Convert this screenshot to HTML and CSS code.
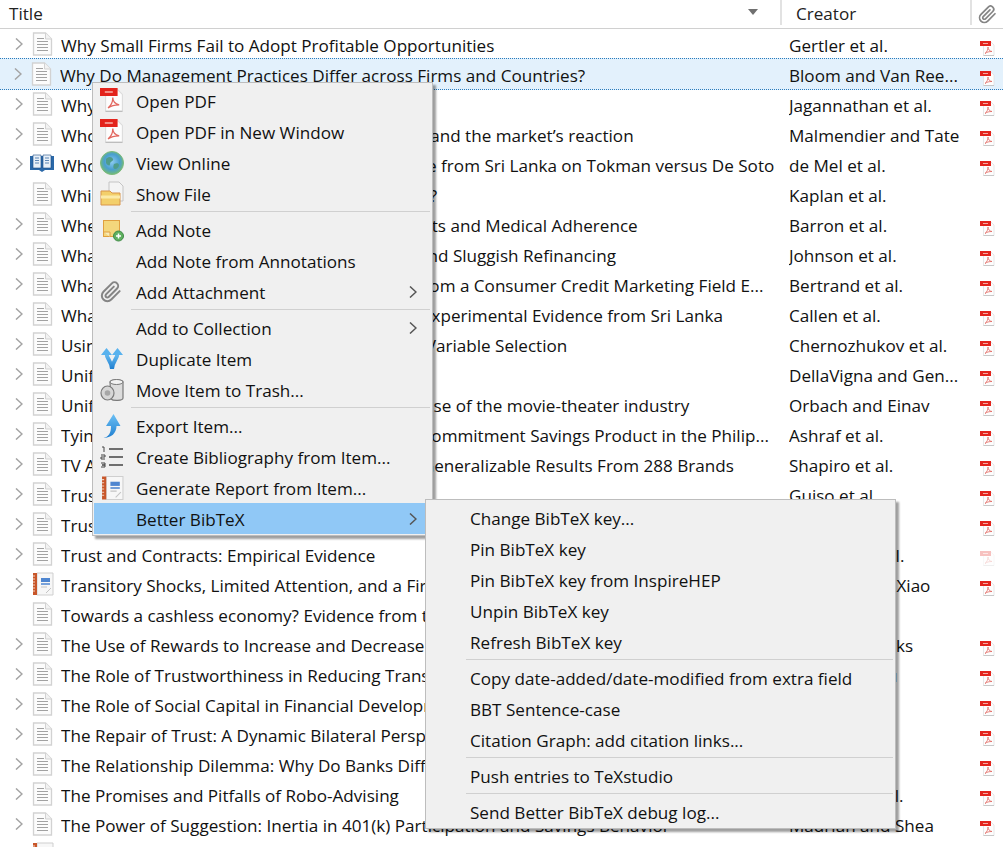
FILE: index.html
```html
<!DOCTYPE html>
<html lang="en">
<head>
  <meta charset="UTF-8">
  <title>Library</title>
  <link rel="stylesheet" href="styles.css">
</head>
<body>

  <svg class="defs" width="0" height="0">
    <defs>
      <linearGradient id="blue-arrow" x1="0" y1="0" x2="0" y2="1">
        <stop offset="0" stop-color="#6cc0f4"/>
        <stop offset="1" stop-color="#1f7fd0"/>
      </linearGradient>
      <radialGradient id="globe" cx="50%" cy="45%" r="55%">
        <stop offset="0" stop-color="#8ccbf0"/>
        <stop offset=".6" stop-color="#4a9fd0"/>
        <stop offset="1" stop-color="#72bb74"/>
      </radialGradient>
      <symbol id="i-doc" viewBox="0 0 21 24">
        <path d="M1.500 1h12l6 6v16h-18z" fill="#fcfcfc" stroke="#d2d2d2" stroke-width="1.300"/>
        <path d="M13.500 1v6h6" fill="#f2f2f2" stroke="#d2d2d2"/>
        <path d="M5 6.500h7M5 9.500h11M5 12.500h11M5 15.500h11M5 18.500h11" stroke="#a2a2a2"/>
      </symbol>
      <symbol id="i-book" viewBox="0 0 24 20">
        <path d="M0 2h24v14h-9l-3 2-3-2h-9z" fill="#2a68a8"/>
        <path d="M3 1h8v13h-8zM13 1h8v13h-8z" fill="#e8f0f8" stroke="#174a84" stroke-width=".6"/>
        <path d="M5 4h4M5 6.500h4M5 9h4M15 4h4M15 6.500h4M15 9h4" stroke="#5d86b4"/>
      </symbol>
      <symbol id="i-report" viewBox="0 0 22 24">
        <path d="M5 1h16v22h-16z" fill="#f7f7f7" stroke="#cfcfcf"/>
        <rect x="1" y="1" width="4" height="22" fill="#c8562a"/>
        <path d="M1 4h2M1 7h2M1 10h2M1 13h2M1 16h2M1 19h2" stroke="#f2d3c0"/>
        <rect x="9" y="6" width="9" height="4" fill="#4f86d0"/>
        <path d="M9 12h9" stroke="#4f86d0" stroke-width="1.500"/>
        <path d="M9 15h6M14 21l5-5" stroke="#c4c4c4"/>
      </symbol>
      <symbol id="i-pdf" viewBox="0 0 15 15">
        <path d="M3.500 .5h7l3.500 3.500v10.500h-10.500z" fill="#fdfdfd" stroke="#dcdcdc" stroke-width=".7"/>
        <path d="M3.500 14.600h10.500" stroke="#bdbdbd" stroke-width=".8"/>
        <rect x="0" y="0" width="11" height="5" fill="#e3231c"/>
        <path d="M3 2.500h5" stroke="#f6a8a0" stroke-width="1"/>
        <path d="M5 12.500c2-1.500 3-4 3-6.500 0 2.500 1.500 4 4 4.500-3 0-5 .5-7 2z" fill="none" stroke="#e2675f" stroke-width=".8"/>
      </symbol>
      <symbol id="i-clip" viewBox="0 0 24 24">
        <path d="M21.440 11.050l-9.190 9.190a6 6 0 0 1-8.490-8.490l9.190-9.190a4 4 0 0 1 5.660 5.660l-9.200 9.190a2 2 0 0 1-2.830-2.830l8.490-8.480" fill="none" stroke="#858585" stroke-width="2.200" stroke-linecap="round"/>
      </symbol>
      <symbol id="i-chev" viewBox="0 0 8 12">
        <path d="M1 .5l6 5.500-6 5.500" fill="none" stroke="currentColor" stroke-width="1.500"/>
      </symbol>
    </defs>
  </svg>

  <div class="items">
    <div class="head">
      <div class="head-title">Title<span class="sort"></span></div>
      <div class="head-creator">Creator</div>
      <div class="head-att"><svg class="clip"><use href="#i-clip"/></svg></div>
    </div>
    <div id="rows"></div>
  </div>

  <!-- context menu -->
  <div class="menu main-menu">
    <div class="mi"><svg class="mi-icon"><use href="#i-pdf" width="24" height="24"/></svg><span>Open PDF</span></div>
    <div class="mi"><svg class="mi-icon"><use href="#i-pdf" width="24" height="24"/></svg><span>Open PDF in New Window</span></div>
    <div class="mi">
      <svg class="mi-icon" viewBox="0 0 24 26">
        <circle cx="12" cy="13" r="11.500" fill="url(#globe)" stroke="#7cba7c"/>
        <path d="M6 9c3-3 6-2 7 0s-3 2-3 5-3 1-4-1zM14 14c2-1 5-1 5 1s-2 4-4 4-2-3-1-5z" fill="#4f9c8a"/>
      </svg>
      <span>View Online</span>
    </div>
    <div class="mi">
      <svg class="mi-icon" viewBox="0 0 24 26">
        <path d="M9 1h10l4 4v15h-14z" fill="#f4f4f4" stroke="#c4c4c4"/>
        <path d="M1 10h9l2 2h8v12h-19z" fill="#f3cf6b" stroke="#d9954a"/>
        <path d="M1 16h19" stroke="#fbeaa8" stroke-width="3"/>
      </svg>
      <span>Show File</span>
    </div>
    <div class="sep"></div>
    <div class="mi">
      <svg class="mi-icon" viewBox="0 0 24 26">
        <rect x="3.500" y="3.500" width="16" height="16" fill="#f4d77c" stroke="#e0a040"/>
        <path d="M4 15h6v5" fill="#f8ebb8" stroke="#e0a040"/>
        <circle cx="18.500" cy="19" r="5" fill="#5fb060" stroke="#3e8a46"/>
        <path d="M16 19h5M18.500 16.500v5" stroke="#fff" stroke-width="1.500"/>
      </svg>
      <span>Add Note</span>
    </div>
    <div class="mi"><span class="mi-icon"></span><span>Add Note from Annotations</span></div>
    <div class="mi">
      <svg class="mi-icon"><use href="#i-clip" width="22" height="22" x="0" y="2"/></svg>
      <span>Add Attachment</span>
      <svg class="mi-arrow"><use href="#i-chev"/></svg>
    </div>
    <div class="sep"></div>
    <div class="mi">
      <span class="mi-icon"></span>
      <span>Add to Collection</span>
      <svg class="mi-arrow"><use href="#i-chev"/></svg>
    </div>
    <div class="mi">
      <svg class="mi-icon" viewBox="0 0 24 26">
        <path d="M6.500 7c0 7 5.500 8 5.500 16M17.500 7c0 7-5.500 8-5.500 16" fill="none" stroke="url(#blue-arrow)" stroke-width="4"/>
        <path d="M1 9l5.500-7 5.500 7zM12 9l5.500-7 5.500 7z" fill="#58b2ee"/>
      </svg>
      <span>Duplicate Item</span>
    </div>
    <div class="mi">
      <svg class="mi-icon" viewBox="0 0 24 26">
        <path d="M10 5c0-3 13-3 13 0v16c0 3-10 3-12 1z" fill="#dcdcdc" stroke="#7a7a7a" stroke-width="1.200"/>
        <ellipse cx="16.500" cy="5" rx="6.500" ry="2.500" fill="#f2f2f2" stroke="#7a7a7a"/>
        <ellipse cx="7.500" cy="16" rx="6.500" ry="7" fill="#d6d6d6" stroke="#7a7a7a" stroke-width="1.200"/>
        <circle cx="7.500" cy="16" r="2.800" fill="#a6a6a6"/>
      </svg>
      <span>Move Item to Trash...</span>
    </div>
    <div class="sep"></div>
    <div class="mi">
      <svg class="mi-icon" viewBox="0 0 24 26">
        <path d="M3 25c6-1 8-5 8-12H6l7.500-12 7 12h-4c0 7-5 12-13.500 12z" fill="url(#blue-arrow)"/>
      </svg>
      <span>Export Item...</span>
    </div>
    <div class="mi">
      <svg class="mi-icon" viewBox="0 0 24 26">
        <path d="M9 5h14M9 13h14M9 21h14" stroke="#444" stroke-width="1.600"/>
        <path d="M2 3h2v5M1 11h4v2h-4v2h4M1 19h4v2h-3 3v2h-4" fill="none" stroke="#444"/>
      </svg>
      <span>Create Bibliography from Item...</span>
    </div>
    <div class="mi"><svg class="mi-icon"><use href="#i-report" x="1" width="23" height="26"/></svg><span>Generate Report from Item...</span></div>
    <div class="mi mi-active">
      <span class="mi-icon"></span>
      <span>Better BibTeX</span>
      <svg class="mi-arrow"><use href="#i-chev"/></svg>
    </div>
  </div>

  <div class="menu sub-menu">
    <div class="mi"><span>Change BibTeX key...</span></div>
    <div class="mi"><span>Pin BibTeX key</span></div>
    <div class="mi"><span>Pin BibTeX key from InspireHEP</span></div>
    <div class="mi"><span>Unpin BibTeX key</span></div>
    <div class="mi"><span>Refresh BibTeX key</span></div>
    <div class="sep"></div>
    <div class="mi"><span>Copy date-added/date-modified from extra field</span></div>
    <div class="mi"><span>BBT Sentence-case</span></div>
    <div class="mi"><span>Citation Graph: add citation links...</span></div>
    <div class="sep"></div>
    <div class="mi"><span>Push entries to TeXstudio</span></div>
    <div class="sep"></div>
    <div class="mi"><span>Send Better BibTeX debug log...</span></div>
  </div>

  <script>
    // title, creator, attachment (1 pdf, 2 faded pdf, 0 none), icon, has twisty
    const items = [
      ["Why Small Firms Fail to Adopt Profitable Opportunities", "Gertler et al.", 1, "doc", 1],
      ["Why Do Management Practices Differ across Firms and Countries?", "Bloom and Van Ree...", 1, "doc", 1],
      ["Why Do Firms Pay Dividends?", "Jagannathan et al.", 1, "doc", 1],
      ["Who makes acquisitions? CEO overconfidence and the market’s reaction", "Malmendier and Tate", 1, "doc", 1],
      ["Who are the microenterprise owners? Evidence from Sri Lanka on Tokman versus De Soto", "de Mel et al.", 1, "book", 1],
      ["Which CEO Characteristics and Abilities Matter?", "Kaplan et al.", 0, "doc", 0],
      ["When Do Nudges Work? Smartphone Text Alerts and Medical Adherence", "Barron et al.", 1, "doc", 1],
      ["What’s the Catch? Suspicion of Bank Motives and Sluggish Refinancing", "Johnson et al.", 1, "doc", 1],
      ["What’s Advertising Content Worth? Evidence from a Consumer Credit Marketing Field E...", "Bertrand et al.", 1, "doc", 1],
      ["What Are the Headwaters of Formal Savings? Experimental Evidence from Sri Lanka", "Callen et al.", 1, "doc", 1],
      ["Using Double-Lasso Regression for Principled Variable Selection", "Chernozhukov et al.", 1, "doc", 1],
      ["Uniform Pricing in U.S. Retail Chains", "DellaVigna and Gen...", 1, "doc", 1],
      ["Uniform prices for differentiated goods: The case of the movie-theater industry", "Orbach and Einav", 1, "doc", 1],
      ["Tying Odysseus to the Mast: Evidence from a Commitment Savings Product in the Philip...", "Ashraf et al.", 1, "doc", 1],
      ["TV Advertising Effectiveness and Profitability: Generalizable Results From 288 Brands", "Shapiro et al.", 1, "doc", 1],
      ["Trusting the Stock Market", "Guiso et al.", 1, "doc", 1],
      ["Trust, Risk and Time Preferences", "Knack et al.", 1, "doc", 1],
      ["Trust and Contracts: Empirical Evidence", "Malhotra et al.", 2, "doc", 1],
      ["Transitory Shocks, Limited Attention, and a Firm’s Decision to Borrow", "Maloney and Xiao", 1, "report", 1],
      ["Towards a cashless economy? Evidence from the world’s largest mobile money", "", 0, "doc", 0],
      ["The Use of Rewards to Increase and Decrease Trust: Mediating Processes", "Dirks and Parks", 1, "doc", 1],
      ["The Role of Trustworthiness in Reducing Transaction Costs and Improving", "Dyer and Chu", 1, "doc", 1],
      ["The Role of Social Capital in Financial Development", "Guiso et al.", 1, "doc", 1],
      ["The Repair of Trust: A Dynamic Bilateral Perspective and Multilevel", "Kim et al.", 1, "doc", 1],
      ["The Relationship Dilemma: Why Do Banks Differ in the Pricing of Loans", "Boot et al.", 1, "doc", 1],
      ["The Promises and Pitfalls of Robo-Advising", "D’Acunto et al.", 1, "doc", 1],
      ["The Power of Suggestion: Inertia in 401(k) Participation and Savings Behavior", "Madrian and Shea", 1, "doc", 1],
      ["The Persistence of Financial Distress", "Smith et al.", 1, "report", 1]
    ];

    const rows = document.getElementById("rows");
    items.forEach(function (item, i) {
      const row = document.createElement("div");
      row.className = i === 1 ? "row selected" : "row";
      const twisty = item[4] ? '<svg class="twisty"><use href="#i-chev"/></svg>' : '<span class="twisty"></span>';
      let att = "";
      if (item[2]) {
        att = '<svg class="att' + (item[2] === 2 ? " faded" : "") + '"><use href="#i-pdf"/></svg>';
      }
      row.innerHTML = twisty +
        '<svg class="type ' + item[3] + '"><use href="#i-' + item[3] + '"/></svg>' +
        '<div class="title">' + item[0] + '</div>' +
        '<div class="creator">' + item[1] + '</div>' +
        '<div class="att-cell">' + att + '</div>';
      rows.appendChild(row);
    });
  </script>

</body>
</html>
```

FILE: styles.css
```css
* {
  box-sizing: border-box;
}

html, body {
  height: 100%;
}

body {
  margin: 0;
  overflow: hidden;
  position: relative;
  background: #fff;
  color: #111;
  font-family: "Open Sans", "Noto Sans", sans-serif;
  font-size: 17.100px;
}

.defs {
  position: absolute;
}

.head {
  display: flex;
  align-items: flex-start;
  height: 29px;
  border-bottom: 1px solid #d0d0d0;
  color: #222;
}

.head-title {
  width: 782px;
  height: 25px;
  padding: 2px 0 0 9px;
  border-right: 2px solid #e2e2e2;
  position: relative;
}

.sort {
  position: absolute;
  right: 22px;
  top: 9px;
  border-left: 5px solid transparent;
  border-right: 5px solid transparent;
  border-top: 6px solid #707070;
}

.head-creator {
  width: 190px;
  height: 25px;
  padding: 2px 0 0 14px;
  border-right: 2px solid #e2e2e2;
}

.head-att {
  flex: 1;
  padding: 5px 0 0 6px;
}

.clip {
  display: block;
  width: 19px;
  height: 19px;
}

.row {
  display: flex;
  align-items: center;
  height: 30px;
}

.row.selected {
  height: 32px;
  margin: -1px 0;
  background: #e3f1fc;
  border-top: 1px dotted #2a7cbd;
  border-bottom: 1px dotted #2a7cbd;
  position: relative;
}

.twisty {
  width: 8px;
  height: 12px;
  margin-left: 15px;
  flex: none;
  color: #a4a4a4;
}

.selected .twisty {
  margin-left: 14px;
}

.type {
  width: 21px;
  height: 24px;
  margin-left: 9px;
  flex: none;
}

.type.book {
  width: 24px;
  margin: 0 -1px 0 7px;
}

.type.report {
  width: 22px;
  margin-right: -1px;
}

.title {
  width: 720px;
  margin-left: 8px;
  padding-top: 2px;
  flex: none;
  white-space: nowrap;
  overflow: hidden;
}

.selected .title {
  width: 721px;
}

.creator {
  width: 180px;
  margin-left: 8px;
  padding-top: 2px;
  flex: none;
  white-space: nowrap;
  overflow: hidden;
}

.att-cell {
  margin: 8px 0 0 11px;
  width: 15px;
  height: 15px;
}

.att {
  width: 15px;
  height: 15px;
  display: block;
}

.att.faded {
  opacity: 0.28;
}

.menu {
  position: absolute;
  background: #f0f0f0;
  border: 1px solid #bdbdbd;
  box-shadow: 3px 3px 2px rgba(0, 0, 0, 0.38);
  padding: 2px 1px 1px;
}

.main-menu {
  left: 92px;
  top: 82px;
  width: 341px;
}

.sub-menu {
  left: 425px;
  top: 499px;
  width: 471px;
}

.mi {
  display: flex;
  align-items: center;
  height: 31px;
  color: #111;
  white-space: nowrap;
}

.mi > span:not(.mi-icon) {
  padding-top: 2px;
}

.mi-icon {
  width: 24px;
  height: 26px;
  margin: 0 4px 0 6px;
  flex: none;
}

.main-menu .mi > span:not(.mi-icon) {
  margin-left: 8px;
}

.sub-menu .mi {
  padding-left: 43px;
}

.mi-arrow {
  width: 8px;
  height: 12px;
  margin-left: auto;
  margin-right: 14px;
  color: #555;
}

.mi-active {
  background: #90c8f6;
}

.sep {
  height: 1px;
  margin: 2px 1px 2px 37px;
  background: #d0d0d0;
}

.sub-menu .sep {
  margin-left: 39px;
}
```
